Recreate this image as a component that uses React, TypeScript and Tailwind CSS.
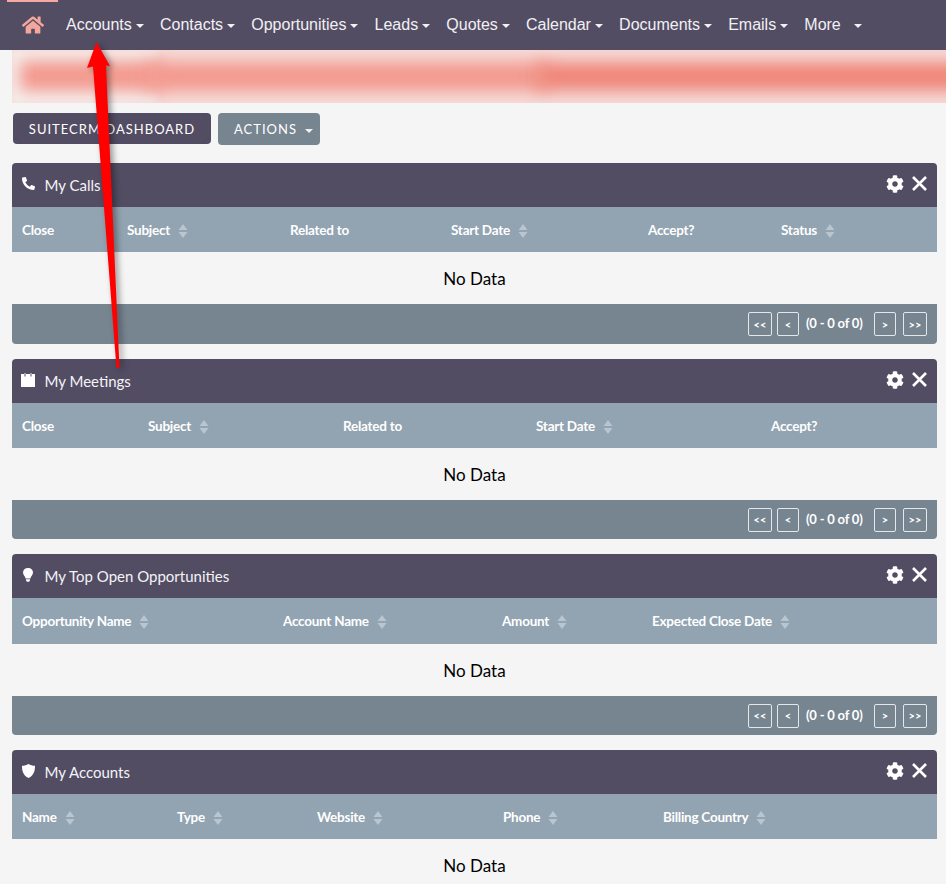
import { ReactNode } from 'react';
import { FaCog, FaHome, FaPhoneAlt } from 'react-icons/fa';

const navItems = ['Accounts', 'Contacts', 'Opportunities', 'Leads', 'Quotes', 'Calendar', 'Documents', 'Emails'];

function Caret({ className = '' }: { className?: string }) {
  return <span className={`inline-block w-0 h-0 border-x-[4px] border-x-transparent border-t-[4px] border-t-[#f1f0f3] ${className}`} />;
}

function SortIcon() {
  return (
    <svg width="10" height="16" viewBox="0 0 10 16" className="ml-2 mt-px shrink-0">
      <path d="M5 1 L9.5 7 H0.5 Z M0.5 9 H9.5 L5 15 Z" fill="#b9c5cf" />
    </svg>
  );
}

function CloseIcon() {
  return (
    <svg width="15" height="15" viewBox="0 0 15 15">
      <path d="M1 1 L14 14 M14 1 L1 14" stroke="#ffffff" strokeWidth="2.6" fill="none" />
    </svg>
  );
}

function CalendarIcon() {
  return (
    <svg width="14" height="14" viewBox="0 0 14 14">
      <path d="M0 1 H14 V14 H0 Z" fill="#ffffff" />
      <path d="M3 0 H5 V3.5 H3 Z M9 0 H11 V3.5 H9 Z" fill="#a8a2b3" />
    </svg>
  );
}

function BulbIcon() {
  return (
    <svg width="10" height="14" viewBox="0 0 10 14">
      <path d="M5 0 C8 0 10 2 10 4.6 C10 7 8 8 7.4 10.5 H2.6 C2 8 0 7 0 4.6 C0 2 2 0 5 0 Z M3 11.3 H7 V12.4 L6 13.8 H4 L3 12.4 Z" fill="#ffffff" />
    </svg>
  );
}

function ShieldIcon() {
  return (
    <svg width="13" height="14" viewBox="0 0 13 14">
      <path d="M6.5 0 C8.5 1.2 10.5 1.8 13 1.8 C13 7 12 11.5 6.5 14 C1 11.5 0 7 0 1.8 C2.5 1.8 4.5 1.2 6.5 0 Z" fill="#ffffff" />
    </svg>
  );
}

function PageButton({ label, className }: { label: string; className: string }) {
  return (
    <button className={`h-6 flex items-center justify-center border border-[#e4e8eb] rounded-[2px] text-white text-[11px] font-bold leading-none ${className}`}>
      {label}
    </button>
  );
}

interface Column {
  label: string;
  width: string;
  sortable?: boolean;
}

interface PanelProps {
  title: string;
  icon: ReactNode;
  columns: Column[];
  headHeight?: string;
  footerHeight?: string;
  hasFooter?: boolean;
}

function Panel({ title, icon, columns, headHeight = 'h-[45px]', footerHeight = 'h-10', hasFooter = true }: PanelProps) {
  return (
    <section className="ml-3 w-[925px] mb-[15px]">
      <div className="h-11 bg-[#534d64] rounded-t-[4px] flex items-center pl-[9px] pr-[10px] text-white">
        <span className="w-[14px] -mt-[3px] mr-[9.5px] flex justify-center">{icon}</span>
        <span className="text-[15px] text-[#f4f3f6]">{title}</span>
        <span className="ml-auto flex items-center gap-2 -mt-[3px]">
          <FaCog size={18} />
          <CloseIcon />
        </span>
      </div>
      <div className={`${headHeight} bg-[#92a3b1] flex items-center pl-[10px] pt-px text-white text-[13.5px] font-bold tracking-[-0.25px]`}>
        {columns.map((col) => (
          <div key={col.label} className={`flex items-center shrink-0 ${col.width}`}>
            <span>{col.label}</span>
            {col.sortable && <SortIcon />}
          </div>
        ))}
      </div>
      <div className="h-[52px] flex items-center justify-center pt-px text-[17px] text-black">No Data</div>
      {hasFooter && (
        <div className={`${footerHeight} bg-[#778591] rounded-b-[4px] flex items-center justify-end pr-[10px]`}>
          <PageButton label="<<" className="w-6" />
          <PageButton label="<" className="w-[22px] ml-[5px]" />
          <span className="w-[75px] pl-[7px] text-white text-[13px] font-bold tracking-[-0.2px]">(0 - 0 of 0)</span>
          <PageButton label=">" className="w-[22px]" />
          <PageButton label=">>" className="w-6 ml-[7px]" />
        </div>
      )}
    </section>
  );
}

export default function App() {
  return (
    <div className="relative h-screen overflow-hidden bg-[#f5f5f5] font-['Lato',sans-serif]">
      {/* Top nav */}
      <nav className="relative h-[50px] bg-[#534d64] flex items-center font-['Liberation_Sans',sans-serif] text-[16px] text-[#f1f0f3]">
        <div className="absolute left-[7px] top-0 w-[51px] h-[2px] bg-[#f7a8a0]" />
        <div className="w-[66px] pl-[22px]">
          <FaHome size={22} color="#f4a69c" />
        </div>
        {navItems.map((item) => (
          <div key={item} className="flex items-center mr-[16.15px]">
            <span>{item}</span>
            <Caret className="ml-[4px] mt-[2px]" />
          </div>
        ))}
        <div className="flex items-center">
          <span>More</span>
          <Caret className="ml-[13px] mt-[2px]" />
        </div>
      </nav>

      {/* Blurred out banner */}
      <div className="ml-3 h-[53px] overflow-hidden bg-[#f6dcd9] relative">
        <div className="absolute left-0 w-[145px] inset-y-0 bg-[#f6efee] blur-[3px]" />
        <div className="absolute left-[8px] w-[140px] top-[11px] h-[30px] bg-[#f3988d] blur-[8px]" />
        <div className="absolute left-[135px] w-[400px] top-[12px] h-[29px] bg-[#f3998e] blur-[8px]" />
        <div className="absolute left-[525px] right-[-30px] top-[12px] h-[29px] bg-[#ef8679] blur-[8px]" />
      </div>

      {/* Action buttons */}
      <div className="flex ml-[13px] mt-[10px] mb-[18px] gap-[7px] h-8">
        <button className="w-[198px] h-[31px] pt-[2px] rounded-[4px] bg-[#534d64] text-white text-[13px] font-normal tracking-[1px]">
          SUITECRM DASHBOARD
        </button>
        <button className="w-[102px] h-8 pt-px rounded-[4px] bg-[#778591] text-white text-[13px] font-normal tracking-[1px] flex items-center pl-4">
          ACTIONS
          <Caret className="ml-[8px] mt-[2px]" />
        </button>
      </div>

      <Panel
        title="My Calls"
        icon={<FaPhoneAlt size={13} />}
        columns={[
          { label: 'Close', width: 'w-[105px]' },
          { label: 'Subject', width: 'w-[163px]', sortable: true },
          { label: 'Related to', width: 'w-[161px]' },
          { label: 'Start Date', width: 'w-[197px]', sortable: true },
          { label: 'Accept?', width: 'w-[133px]' },
          { label: 'Status', width: 'w-[120px]', sortable: true },
        ]}
      />
      <Panel
        title="My Meetings"
        icon={<CalendarIcon />}
        footerHeight="h-[39px]"
        columns={[
          { label: 'Close', width: 'w-[126px]' },
          { label: 'Subject', width: 'w-[195px]', sortable: true },
          { label: 'Related to', width: 'w-[193px]' },
          { label: 'Start Date', width: 'w-[235px]', sortable: true },
          { label: 'Accept?', width: 'w-[120px]' },
        ]}
      />
      <Panel
        title="My Top Open Opportunities"
        icon={<BulbIcon />}
        headHeight="h-[46px]"
        footerHeight="h-[39px]"
        columns={[
          { label: 'Opportunity Name', width: 'w-[261px]', sortable: true },
          { label: 'Account Name', width: 'w-[219px]', sortable: true },
          { label: 'Amount', width: 'w-[150px]', sortable: true },
          { label: 'Expected Close Date', width: 'w-[220px]', sortable: true },
        ]}
      />
      <Panel
        title="My Accounts"
        icon={<ShieldIcon />}
        hasFooter={false}
        columns={[
          { label: 'Name', width: 'w-[155px]', sortable: true },
          { label: 'Type', width: 'w-[140px]', sortable: true },
          { label: 'Website', width: 'w-[186px]', sortable: true },
          { label: 'Phone', width: 'w-[160px]', sortable: true },
          { label: 'Billing Country', width: 'w-[180px]', sortable: true },
        ]}
      />

      {/* Red annotation arrow over the page */}
      <svg width="140" height="340" viewBox="0 0 140 340" className="absolute left-0 top-[40px] drop-shadow-[3px_2px_3px_rgba(0,0,0,0.4)]">
        <path d="M96.5 2 L110 26 L106 25.5 L119.5 328 L116.5 328 L93 26.5 L87 28 Z" fill="#ff0000" />
      </svg>
    </div>
  );
}
